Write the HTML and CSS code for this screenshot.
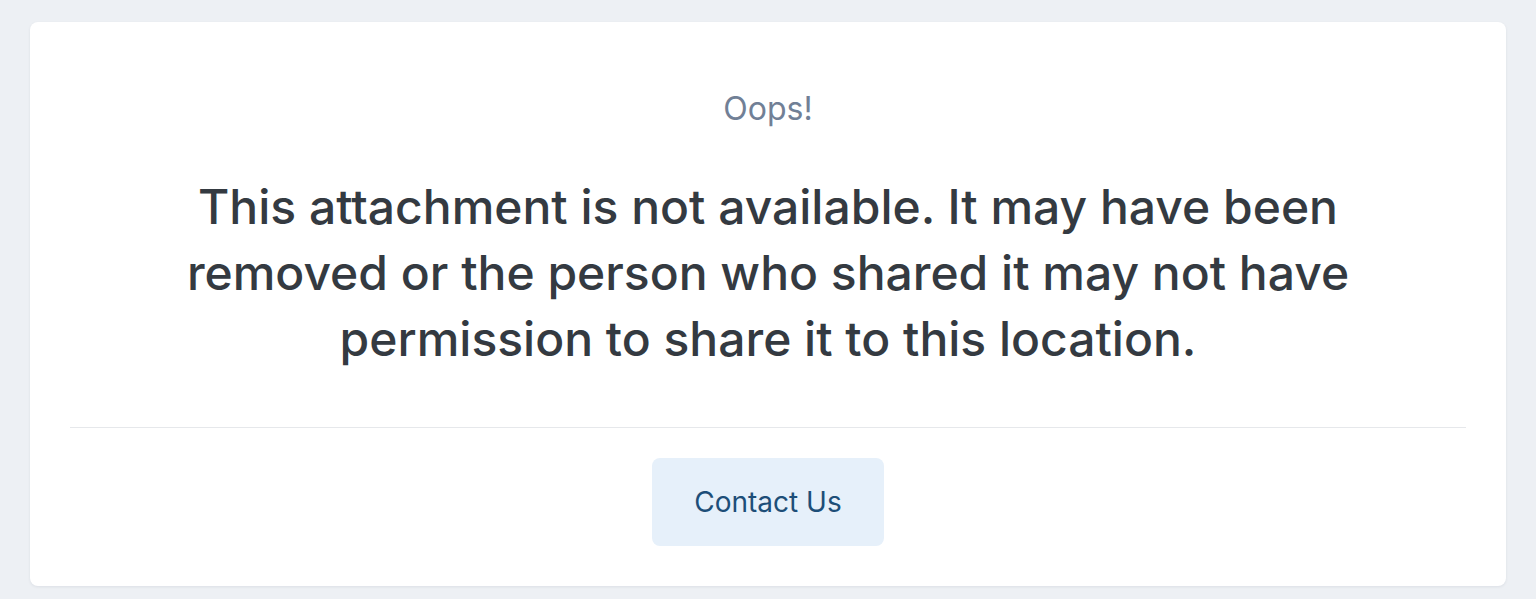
FILE: index.html
```html
<!DOCTYPE html>
<html lang="en">
<head>
<meta charset="utf-8">
<title>Attachment not available</title>
<link rel="stylesheet" href="styles.css">
</head>
<body>
<main class="page">
  <section class="card">
    <div class="message">
      <p class="eyebrow">Oops!</p>
      <h1 class="headline">This attachment is not available. It may have been removed or the person who shared it may not have permission to share it to this location.</h1>
    </div>
    <div class="actions">
      <a class="button" href="#">Contact Us</a>
    </div>
  </section>
</main>
</body>
</html>
```

FILE: styles.css
```css
* { box-sizing: border-box; }
html, body { margin: 0; padding: 0; }
body {
  background: #edf0f4;
  font-family: Inter, "Noto Sans", "Liberation Sans", sans-serif;
  -webkit-font-smoothing: antialiased;
}
.page {
  padding: 22px 30px 13px;
}
.card {
  background: #ffffff;
  border-radius: 8px;
  box-shadow: 0 1px 3px rgba(30, 40, 60, 0.08);
  padding: 40px;
}
.message {
  padding: 23px 0 55px;
  border-bottom: 1px solid #e6e8eb;
  text-align: center;
}
.eyebrow {
  margin: 0 0 41px;
  font-size: 32px;
  line-height: 48px;
  color: #718096;
  font-weight: 400;
}
.headline {
  margin: 0 auto;
  max-width: 1200px;
  font-size: 48px;
  line-height: 66px;
  font-weight: 500;
  color: #343a41;
}
.actions {
  display: flex;
  justify-content: center;
  padding-top: 30px;
}
.button {
  display: flex;
  align-items: center;
  justify-content: center;
  width: 232px;
  height: 88px;
  border-radius: 8px;
  background: #e6f0fa;
  color: #1d4e78;
  font-size: 28px;
  text-decoration: none;
}
```
